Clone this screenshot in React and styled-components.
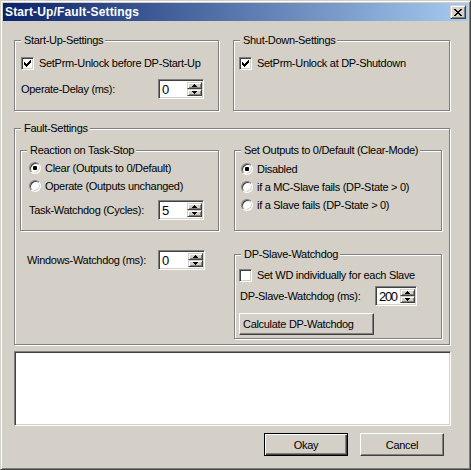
import React from 'react';
import styled, { createGlobalStyle, css } from 'styled-components';

const Global = createGlobalStyle`
  html, body { margin: 0; padding: 0; background: #D4D0C8; }
  body { font-family: "Liberation Sans", Arial, sans-serif; font-size: 11px; color: #000; }
`;

const raised = css`
  border: 1px solid;
  border-color: #D4D0C8 #404040 #404040 #D4D0C8;
  box-shadow: inset 1px 1px #fff, inset -1px -1px #808080;
  background: #D4D0C8;
`;

const sunken = css`
  border: 1px solid;
  border-color: #808080 #fff #fff #808080;
  box-shadow: inset 1px 1px #404040, inset -1px -1px #D4D0C8;
  background: #fff;
`;

const Window = styled.div`
  width: 471px;
  height: 470px;
  box-sizing: border-box;
  border: 1px solid;
  border-color: #D4D0C8 #404040 #404040 #D4D0C8;
  box-shadow: inset 1px 1px #fff, inset -1px -1px #808080;
  padding: 2px;
  background: #D4D0C8;
  display: flex;
  flex-direction: column;
  font-family: "Liberation Sans", Arial, sans-serif;
  font-size: 11px;
  letter-spacing: -0.3px;
  color: #000;
`;

const TitleBar = styled.div`
  height: 18px;
  flex: none;
  display: flex;
  align-items: center;
  justify-content: space-between;
  padding: 0 2px;
  background: linear-gradient(to right, #0A246A, #A6CAF0);
`;

const Title = styled.span`
  color: #fff;
  font-weight: bold;
  font-size: 12px;
  line-height: 18px;
  letter-spacing: 0.15px;
`;

const CloseButton = styled.div`
  width: 16px;
  height: 14px;
  box-sizing: border-box;
  ${raised};
  display: flex;
  align-items: center;
  justify-content: center;
`;

const Client = styled.div`
  display: flex;
  flex-direction: column;
  padding: 19px 0 0 11px;
`;

const TopRow = styled.div`
  display: flex;
  gap: 14px;
`;

const Group = styled.div`
  position: relative;
  box-sizing: border-box;
  width: ${p => p.$w}px;
  height: ${p => p.$h}px;
  margin-top: ${p => p.$mt || 0}px;
  border: 1px solid #808080;
  box-shadow: inset 1px 1px #fff, 1px 1px #fff;
  padding: ${p => p.$pad};
  display: flex;
  flex-direction: column;
`;

const Legend = styled.span`
  position: absolute;
  top: -7px;
  left: 6px;
  padding: 0 2px 0 3px;
  background: #D4D0C8;
  line-height: 13px;
  white-space: nowrap;
`;

const CheckRow = styled.label`
  display: flex;
  align-items: center;
  gap: 5px;
  height: 13px;
  line-height: 13px;
  white-space: nowrap;
`;

const CheckBox = styled.span`
  width: 13px;
  height: 13px;
  box-sizing: border-box;
  flex: none;
  ${sunken};
  display: flex;
  align-items: center;
  justify-content: center;
`;

const RadioList = styled.div`
  display: flex;
  flex-direction: column;
  gap: 6px;
`;

const RadioRow = styled.label`
  display: flex;
  align-items: center;
  gap: 4px;
  height: 12px;
  line-height: 13px;
  white-space: nowrap;
`;

const RadioCircle = styled.span`
  width: 12px;
  height: 12px;
  box-sizing: border-box;
  flex: none;
  border-radius: 50%;
  border: 1px solid;
  border-color: #808080 #fff #fff #808080;
  box-shadow: inset 1px 1px #404040, inset -1px -1px #D4D0C8;
  background: #fff;
  display: flex;
  align-items: center;
  justify-content: center;
`;

const RadioDot = styled.span`
  width: 4px;
  height: 4px;
  border-radius: 1px;
  background: #000;
`;

const FieldRow = styled.div`
  display: grid;
  grid-template-columns: ${p => p.$label}px auto;
  align-items: center;
  height: 20px;
  margin-top: ${p => p.$mt || 0}px;
  padding-left: ${p => p.$pl || 0}px;
  white-space: nowrap;
`;

const SpinBox = styled.div`
  width: ${p => p.$w}px;
  height: 20px;
  box-sizing: border-box;
  ${sunken};
  display: flex;
  padding: 2px 1px 2px 2px;
`;

const SpinText = styled.span`
  flex: 1;
  font-size: 13px;
  letter-spacing: -1.3px;
  line-height: 16px;
  padding-left: 1px;
`;

const SpinButtons = styled.div`
  display: flex;
  flex-direction: column;
  width: 15px;
`;

const SpinButton = styled.div`
  flex: 1;
  box-sizing: border-box;
  ${raised};
  display: flex;
  align-items: center;
  justify-content: center;
`;

const FaultGrid = styled.div`
  display: grid;
  grid-template-columns: 199px 208px;
  grid-template-rows: 81px auto;
  column-gap: 15px;
  row-gap: 19px;
`;

const WatchdogCell = styled.div`
  align-self: start;
  padding-left: 7px;
`;

const PushButton = styled.button`
  width: ${p => p.$w}px;
  height: ${p => p.$h}px;
  box-sizing: border-box;
  margin: ${p => p.$mt || 0}px 0 0 0;
  padding: 0 0 0 ${p => p.$pl || 0}px;
  font: inherit;
  letter-spacing: inherit;
  color: #000;
  background: #D4D0C8;
  text-align: ${p => p.$align || 'center'};
  border: 1px solid;
  border-color: #fff #404040 #404040 #fff;
  box-shadow: inset -1px -1px #808080, inset 1px 1px #D4D0C8;
  white-space: nowrap;
  ${p => p.$default && css`
    border-color: #000;
    box-shadow: inset 1px 1px #fff, inset -1px -1px #404040, inset -2px -2px #808080;
  `}
`;

const MessageBox = styled.div`
  width: 437px;
  height: 75px;
  box-sizing: border-box;
  margin-top: 6px;
  ${sunken};
`;

const ButtonRow = styled.div`
  display: flex;
  justify-content: flex-end;
  gap: 12px;
  width: 437px;
  box-sizing: border-box;
  padding-right: 7px;
  margin-top: 7px;
`;

const FaultWrap = styled.div`
  margin-top: 17px;
`;

const CheckMark = () => (
  <svg width="7" height="7" viewBox="0 0 7 7" shapeRendering="crispEdges">
    {[2, 3, 4, 3, 2, 1, 0].map((y, x) => (
      <rect key={x} x={x} y={y} width="1" height="3" fill="#000" />
    ))}
  </svg>
);

const CloseGlyph = () => (
  <svg width="8" height="7" viewBox="0 0 8 7" shapeRendering="crispEdges">
    {[[0, 6], [1, 5], [2, 4], [3, 3], [2, 4], [1, 5], [0, 6]].map(([a, b], y) => (
      <g key={y}>
        <rect x={a} y={y} width={a === 3 ? 2 : 2} height="1" fill="#000" />
        {a !== b && <rect x={b} y={y} width="2" height="1" fill="#000" />}
      </g>
    ))}
  </svg>
);

const Arrow = ({ dir }) => (
  <svg width="5" height="3" viewBox="0 0 5 3" shapeRendering="crispEdges">
    {dir === 'up' ? (
      <>
        <rect x="2" y="0" width="1" height="1" fill="#000" />
        <rect x="1" y="1" width="3" height="1" fill="#000" />
        <rect x="0" y="2" width="5" height="1" fill="#000" />
      </>
    ) : (
      <>
        <rect x="0" y="0" width="5" height="1" fill="#000" />
        <rect x="1" y="1" width="3" height="1" fill="#000" />
        <rect x="2" y="2" width="1" height="1" fill="#000" />
      </>
    )}
  </svg>
);

const Check = ({ checked, children }) => (
  <CheckRow>
    <CheckBox>{checked && <CheckMark />}</CheckBox>
    <span>{children}</span>
  </CheckRow>
);

const Radio = ({ checked, children }) => (
  <RadioRow>
    <RadioCircle>{checked && <RadioDot />}</RadioCircle>
    <span>{children}</span>
  </RadioRow>
);

const Spin = ({ w, value }) => (
  <SpinBox $w={w}>
    <SpinText>{value}</SpinText>
    <SpinButtons>
      <SpinButton><Arrow dir="up" /></SpinButton>
      <SpinButton><Arrow dir="down" /></SpinButton>
    </SpinButtons>
  </SpinBox>
);

export default function App() {
  return (
    <>
      <Global />
      <Window>
        <TitleBar>
          <Title>Start-Up/Fault-Settings</Title>
          <CloseButton><CloseGlyph /></CloseButton>
        </TitleBar>
        <Client>
          <TopRow>
            <Group $w={205} $h={71} $pad="16px 0 0 6px">
              <Legend>Start-Up-Settings</Legend>
              <Check checked>SetPrm-Unlock before DP-Start-Up</Check>
              <FieldRow $label={137} $mt={9}>
                <span>Operate-Delay (ms):</span>
                <Spin w={46} value="0" />
              </FieldRow>
            </Group>
            <Group $w={217} $h={71} $pad="16px 0 0 5px">
              <Legend>Shut-Down-Settings</Legend>
              <Check checked>SetPrm-Unlock at DP-Shutdown</Check>
            </Group>
          </TopRow>
          <FaultWrap>
            <Group $w={436} $h={217} $pad="21px 0 0 5px">
              <Legend>Fault-Settings</Legend>
              <FaultGrid>
                <Group $w={199} $h={81} $pad="11px 0 0 8px">
                  <Legend>Reaction on Task-Stop</Legend>
                  <RadioList>
                    <Radio checked>Clear (Outputs to 0/Default)</Radio>
                    <Radio>Operate (Outputs unchanged)</Radio>
                  </RadioList>
                  <FieldRow $label={129} $mt={8}>
                    <span>Task-Watchdog (Cycles):</span>
                    <Spin w={46} value="5" />
                  </FieldRow>
                </Group>
                <Group $w={208} $h={81} $pad="12px 0 0 6px">
                  <Legend>Set Outputs to 0/Default (Clear-Mode)</Legend>
                  <RadioList>
                    <Radio checked>Disabled</Radio>
                    <Radio>if a MC-Slave fails (DP-State &gt; 0)</Radio>
                    <Radio>if a Slave fails (DP-State &gt; 0)</Radio>
                  </RadioList>
                </Group>
                <WatchdogCell>
                  <FieldRow $label={131}>
                    <span>Windows-Watchdog (ms):</span>
                    <Spin w={47} value="0" />
                  </FieldRow>
                </WatchdogCell>
                <Group $w={208} $h={85} $mt={4} $pad="14px 0 0 4px">
                  <Legend>DP-Slave-Watchdog</Legend>
                  <Check>Set WD individually for each Slave</Check>
                  <FieldRow $label={135} $mt={4} $pl={1}>
                    <span>DP-Slave-Watchdog (ms):</span>
                    <Spin w={42} value="200" />
                  </FieldRow>
                  <PushButton $w={135} $h={22} $mt={7} $align="left" $pl={3}>
                    Calculate DP-Watchdog
                  </PushButton>
                </Group>
              </FaultGrid>
            </Group>
          </FaultWrap>
          <MessageBox />
          <ButtonRow>
            <PushButton $w={84} $h={23} $default>Okay</PushButton>
            <PushButton $w={84} $h={23}>Cancel</PushButton>
          </ButtonRow>
        </Client>
      </Window>
    </>
  );
}
